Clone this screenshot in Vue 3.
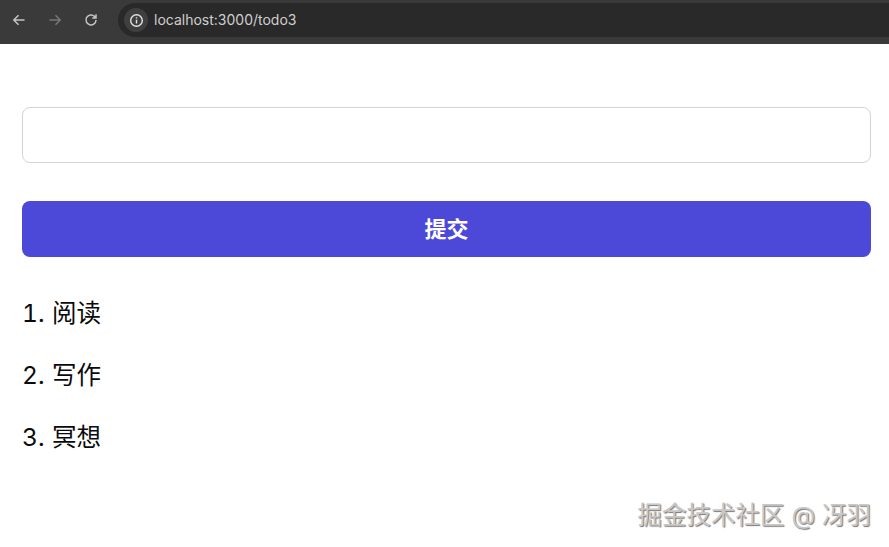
<template>
  <div class="page">
    <div class="toolbar">
      <div class="nav-icons">
        <svg class="nav-icon" viewBox="0 0 16 16" width="16" height="16">
          <path d="M13.5 8H3M7.5 3.2 2.8 8l4.7 4.8" />
        </svg>
        <svg class="nav-icon disabled" viewBox="0 0 16 16" width="16" height="16">
          <path d="M2.5 8H13M8.5 3.2 13.2 8l-4.7 4.8" />
        </svg>
        <svg class="nav-icon" viewBox="0 0 16 16" width="16" height="16">
          <path d="M13 8a5 5 0 1 1-1.5-3.6L13 6M13 2.2V6H9.2" />
        </svg>
      </div>
      <div class="address">
        <span class="info">
          <svg viewBox="0 0 16 16" width="15" height="15">
            <circle cx="8" cy="8" r="6.2" />
            <path d="M8 7.2v4M8 4.4v1.4" />
          </svg>
        </span>
        <span class="url">localhost:3000/todo3</span>
      </div>
    </div>

    <main class="content">
      <input class="todo-input" type="text" />
      <button class="submit" type="button">提交</button>
      <ol class="todo-list">
        <li v-for="(item, idx) in todos" :key="item">{{ idx + 1 }}. {{ item }}</li>
      </ol>
    </main>

    <div class="watermark">掘金技术社区 @ 冴羽</div>
  </div>
</template>

<script setup>
const todos = ['阅读', '写作', '冥想']
</script>

<style>
html, body {
  margin: 0;
  background: #fff;
}
</style>

<style scoped>
.page {
  position: relative;
  width: 889px;
  height: 547px;
  overflow: hidden;
  background: #fff;
  font-family: Inter, "Noto Sans CJK SC", sans-serif;
}

.toolbar {
  display: flex;
  align-items: flex-start;
  height: 44px;
  box-sizing: border-box;
  padding: 3px 0 0 11px;
  background: #3a3a3a;
}

.nav-icons {
  display: flex;
  gap: 20px;
  height: 34px;
  align-items: center;
  width: 96px;
  flex: none;
}

.nav-icon {
  fill: none;
  stroke: #c4c4c4;
  stroke-width: 1.5;
}

.nav-icon.disabled {
  stroke: #777;
}

.address {
  flex: 1;
  height: 34px;
  margin-left: 11px;
  display: flex;
  align-items: center;
  gap: 9px;
  padding-left: 6px;
  background: #292929;
  border-radius: 17px 0 0 17px;
}

.info {
  width: 24px;
  height: 24px;
  border-radius: 50%;
  background: #3f3f3f;
  display: flex;
  align-items: center;
  justify-content: center;
}

.info svg {
  fill: none;
  stroke: #e4e4e4;
  stroke-width: 1.5;
}

.url {
  font-size: 14px;
  color: #cfcfcf;
  margin: -2px 0 0 -3px;
}

.content {
  display: flex;
  flex-direction: column;
  padding: 63px 18px 0 22px;
}

.todo-input {
  height: 56px;
  box-sizing: border-box;
  border: 1.5px solid #d4d4d8;
  border-radius: 8px;
  background: #fff;
  outline: none;
}

.submit {
  height: 56px;
  margin-top: 38px;
  padding: 0 0 5px;
  border: none;
  border-radius: 8px;
  background: #4c48d8;
  color: #fff;
  font-family: inherit;
  font-size: 22px;
  font-weight: 700;
}

.todo-list {
  list-style: none;
  margin: 25px 0 0;
  padding: 0;
}

.todo-list li {
  height: 62px;
  line-height: 62px;
  font-size: 24.5px;
  font-variant-numeric: tabular-nums;
  word-spacing: 1px;
  color: #0a0a0a;
}

.watermark {
  position: absolute;
  right: 18px;
  bottom: 16px;
  font-size: 24.5px;
  line-height: 32px;
  color: #c8c8c8;
  text-shadow: 1px 1px 1px #777, -1px -1px 0 #fff;
  white-space: nowrap;
}
</style>
